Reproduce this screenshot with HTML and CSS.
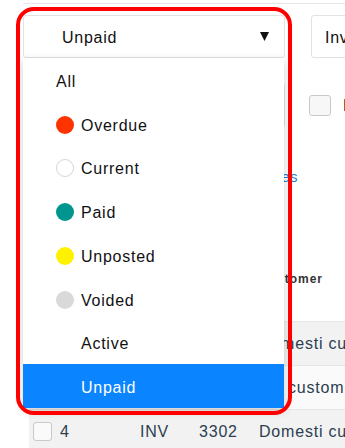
FILE: index.html
```html
<!DOCTYPE html>
<html lang="en">
<head>
<meta charset="utf-8">
<title>Invoices</title>
<link rel="stylesheet" href="styles.css">
</head>
<body>
<div class="page">
  <div class="toolbar">
    <div class="status">
      <div class="select status-select">
        <span class="select-label">Unpaid</span>
        <svg class="caret" width="9" height="9" viewBox="0 0 9 9"><polygon points="0,0 9,0 4.5,9" fill="#111"/></svg>
      </div>
      <ul class="menu">
        <li class="item plain">All</li>
        <li class="item"><span class="dot overdue"></span>Overdue</li>
        <li class="item"><span class="dot current"></span>Current</li>
        <li class="item"><span class="dot paid"></span>Paid</li>
        <li class="item"><span class="dot unposted"></span>Unposted</li>
        <li class="item"><span class="dot voided"></span>Voided</li>
        <li class="item"><span class="spacer"></span>Active</li>
        <li class="item selected"><span class="spacer"></span>Unpaid</li>
      </ul>
      <div class="ring"></div>
    </div>
    <div class="select type-select"><span class="select-label">Invoice type</span></div>
  </div>

  <div class="filters">
    <div class="search"></div>
    <label class="check"><span class="box"></span>Hide paid</label>
  </div>

  <div class="links"><a class="link">Show all invoices</a></div>

  <div class="table">
    <div class="tr head">
      <div class="td"></div>
      <div class="td">#</div>
      <div class="td">Type</div>
      <div class="td">No.</div>
      <div class="td">Customer</div>
    </div>
    <div class="tr odd">
      <div class="td"><span class="box small"></span></div>
      <div class="td">2</div>
      <div class="td">INV</div>
      <div class="td">3300</div>
      <div class="td">Domesti customer</div>
    </div>
    <div class="tr even">
      <div class="td"><span class="box small"></span></div>
      <div class="td">3</div>
      <div class="td">INV</div>
      <div class="td">3301</div>
      <div class="td">EU customer</div>
    </div>
    <div class="tr odd">
      <div class="td"><span class="box small"></span></div>
      <div class="td">4</div>
      <div class="td">INV</div>
      <div class="td">3302</div>
      <div class="td">Domesti customer</div>
    </div>
  </div>
</div>
</body>
</html>
```

FILE: styles.css
```css
html, body {
  margin: 0;
  padding: 0;
  width: 345px;
  height: 448px;
  overflow: hidden;
  background: #fff;
}

body {
  font-family: "Liberation Sans", Arial, sans-serif;
  color: #111;
}

.page {
  padding-top: 3px;
  width: 420px;
}

.toolbar {
  margin-left: 23px;
  border-top: 1px solid #e6e6e6;
  padding-top: 11px;
  display: flex;
  gap: 26px;
}

.status {
  position: relative;
  flex: 0 0 262px;
}

.select {
  box-sizing: border-box;
  height: 43px;
  border: 1px solid #e3e3e3;
  border-radius: 3px;
  background: #fff;
  display: flex;
  align-items: center;
  padding-top: 2px;
  font-size: 16px;
  letter-spacing: 0.75px;
  color: #111;
  white-space: nowrap;
}

.status-select {
  width: 262px;
  padding-left: 38px;
  padding-right: 15px;
  justify-content: space-between;
}

.caret {
  display: block;
  margin-top: -2px;
}

.type-select {
  flex: 0 0 200px;
  padding-left: 13px;
}

.menu {
  position: absolute;
  z-index: 10;
  top: 43px;
  left: 0;
  width: 261px;
  margin: 0;
  padding: 0;
  list-style: none;
  background: #fff;
  box-shadow: 0 3px 9px rgba(0, 0, 0, 0.18);
}

.item {
  box-sizing: border-box;
  height: 43.75px;
  padding-left: 33px;
  padding-top: 4px;
  display: flex;
  align-items: center;
  gap: 7px;
  font-size: 16px;
  letter-spacing: 0.75px;
  color: #111;
}

.item .dot {
  margin-top: -2px;
}

.item.selected {
  background: #0a84ff;
  color: #fff;
}

.dot {
  box-sizing: border-box;
  flex: 0 0 18px;
  width: 18px;
  height: 18px;
  border-radius: 50%;
}

.spacer {
  flex: 0 0 18px;
}

.overdue { background: #ff3300; }
.current { background: #fff; border: 1px solid #d6d6d6; }
.paid { background: #00968f; }
.unposted { background: #fff200; }
.voided { background: #d9d9d9; }

.ring {
  position: absolute;
  z-index: 11;
  left: -7px;
  top: -8px;
  width: 276px;
  height: 408px;
  box-sizing: border-box;
  border: 4px solid #ff0000;
  border-radius: 18px;
  pointer-events: none;
}

.filters {
  margin-left: 23px;
  margin-top: 25px;
  display: flex;
  align-items: center;
}

.search {
  box-sizing: border-box;
  width: 262px;
  height: 45px;
  border: 1px solid #e3e3e3;
  border-radius: 3px;
}

.check {
  margin-left: 24px;
  display: flex;
  align-items: center;
  gap: 12px;
  font-size: 16px;
  letter-spacing: 0.6px;
  color: #222;
  white-space: nowrap;
}

.box {
  box-sizing: border-box;
  display: block;
  width: 22px;
  height: 21px;
  border: 1px solid #c9c9c9;
  border-radius: 3px;
  background: #f7f7f7;
}

.box.small {
  width: 19px;
  height: 19px;
  background: #fafafa;
}

.links {
  margin-left: 23px;
  margin-top: 40px;
  width: 275px;
  text-align: right;
  font-size: 15px;
  line-height: 18px;
}

.link {
  color: #1a7fd4;
  letter-spacing: 0.5px;
}

.table {
  margin-left: 29px;
  margin-top: 70px;
}

.tr {
  box-sizing: border-box;
  height: 44px;
  display: grid;
  grid-template-columns: 31px 80px 59px 60px 1fr;
  align-items: center;
  border-bottom: 1px solid #e6e6e6;
  font-size: 16px;
  letter-spacing: 0.8px;
  color: #2c3e50;
  white-space: nowrap;
}

.tr .td:first-child {
  padding-left: 4px;
}

.tr.head {
  height: 66px;
  align-items: start;
  padding-top: 15px;
  font-size: 12px;
  line-height: 16px;
  font-weight: bold;
  letter-spacing: 1px;
  color: #333;
}

.tr.odd { background: #f2f2f2; }
.tr.even { background: #fafafa; }
```
